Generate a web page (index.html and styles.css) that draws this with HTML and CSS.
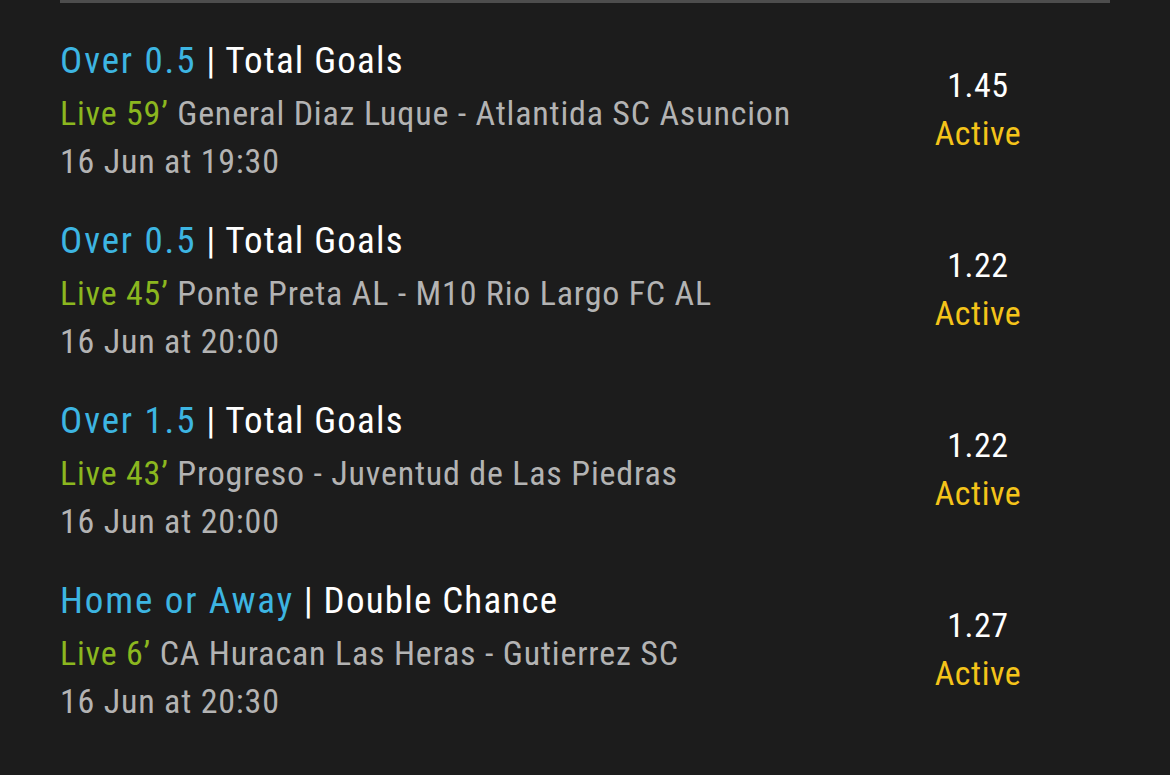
FILE: index.html
```html
<html>
<head>
<link rel="stylesheet" href="styles.css">
</head>
<body>
<section class="bets">
  <div class="bet">
    <div class="info">
      <h2 class="market"><span class="pick">Over 0.5</span> | Total Goals</h2>
      <p class="match"><span class="live">Live 59’</span> General Diaz Luque - Atlantida SC Asuncion</p>
      <p class="date">16 Jun at 19:30</p>
    </div>
    <div class="odds">
      <div class="price">1.45</div>
      <div class="status">Active</div>
    </div>
  </div>
  <div class="bet">
    <div class="info">
      <h2 class="market"><span class="pick">Over 0.5</span> | Total Goals</h2>
      <p class="match"><span class="live">Live 45’</span> Ponte Preta AL - M10 Rio Largo FC AL</p>
      <p class="date">16 Jun at 20:00</p>
    </div>
    <div class="odds">
      <div class="price">1.22</div>
      <div class="status">Active</div>
    </div>
  </div>
  <div class="bet">
    <div class="info">
      <h2 class="market"><span class="pick">Over 1.5</span> | Total Goals</h2>
      <p class="match"><span class="live">Live 43’</span> Progreso - Juventud de Las Piedras</p>
      <p class="date">16 Jun at 20:00</p>
    </div>
    <div class="odds">
      <div class="price">1.22</div>
      <div class="status">Active</div>
    </div>
  </div>
  <div class="bet">
    <div class="info">
      <h2 class="market"><span class="pick">Home or Away</span> | Double Chance</h2>
      <p class="match"><span class="live">Live 6’</span> CA Huracan Las Heras - Gutierrez SC</p>
      <p class="date">16 Jun at 20:30</p>
    </div>
    <div class="odds">
      <div class="price">1.27</div>
      <div class="status">Active</div>
    </div>
  </div>
</section>
</body>
</html>
```

FILE: styles.css
```css
body {
    margin: 0;
    background-color: #1c1c1c;
    font-family: "Roboto Condensed", "DejaVu Sans Condensed", sans-serif;
}
h2,p {
    margin: 0;
    padding: 0;
    font-weight: normal;
}
.bets {
    display: flex;
    flex-direction: column;
    gap: 32px;
    width: 1050px;
    margin-left: 60px;
    padding-top: 34px;
    border-top: 3px #4d4d4d solid;
}
.bet {
    display: flex;
    align-items: center;
}
.info {
    flex: 1;
}
.market {
    margin-bottom: 4px;
    color: #fff;
    font-size: 37px;
    line-height: 48px;
    letter-spacing: 1.2px;
}
.pick {
    color: #3db5e2;
    letter-spacing: 1.9px;
}
.match,
.date {
    color: #b3b3b3;
    font-size: 34px;
    line-height: 48px;
    letter-spacing: .8px;
}
.live {
    color: #8bb71f;
}
.odds {
    width: 170px;
    margin-right: 47px;
    margin-bottom: 4px;
    text-align: center;
    font-size: 34px;
    line-height: 48px;
    letter-spacing: .5px;
}
.price {
    color: #fff;
}
.status {
    color: #f4c41a;
}
```
